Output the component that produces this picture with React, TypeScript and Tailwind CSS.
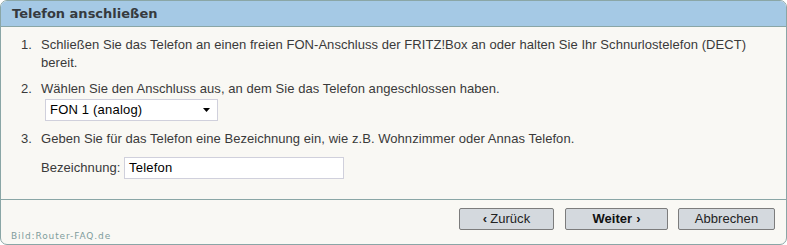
import React from "react";

export default function App() {
  const body = "font-['Liberation_Sans',Arial,sans-serif] text-[13px] tracking-[0.05px] text-[#3a3a3a]";
  return (
    <div className="w-[787px] h-[245px] bg-white">
      <div className="relative w-[787px] h-[245px] border border-[#8aa6a6] rounded-[7px] overflow-hidden bg-[#f9f8f4] flex flex-col">
        <div className="h-[26px] shrink-0 bg-[#a5c9e5] border-b border-[#8aa6a6] pl-[11px] flex items-center">
          <span className="font-['DejaVu_Sans',Verdana,sans-serif] font-bold text-[13px] text-[#363a3e]">
            Telefon anschließen
          </span>
        </div>
        <div className={`flex-1 pt-[9px] pl-[20px] pr-[18px] leading-[18px] ${body}`}>
          <div className="flex">
            <span className="w-[20px] shrink-0">1.</span>
            <span>
              Schließen Sie das Telefon an einen freien FON-Anschluss der FRITZ!Box an oder halten Sie Ihr Schnurlostelefon (DECT) bereit.
            </span>
          </div>
          <div className="flex mt-[8px]">
            <span className="w-[20px] shrink-0">2.</span>
            <div>
              <div>Wählen Sie den Anschluss aus, an dem Sie das Telefon angeschlossen haben.</div>
              <div className="mt-[1px] ml-[4px] w-[173px] h-[22px] bg-white border border-[#d0d0dc] flex items-center justify-between pl-[4px] pr-[6px] text-[13px] tracking-[0.2px] text-black">
                <span>FON 1 (analog)</span>
                <svg width="8" height="4" viewBox="0 0 8 4"><path d="M0 0h7l-3.5 4z" fill="#000" /></svg>
              </div>
            </div>
          </div>
          <div className="flex mt-[9px]">
            <span className="w-[20px] shrink-0">3.</span>
            <div>
              <div>Geben Sie für das Telefon eine Bezeichnung ein, wie z.B. Wohnzimmer oder Annas Telefon.</div>
              <div className="mt-[9px] flex items-center">
                <span className="w-[83px]">Bezeichnung:</span>
                <div className="w-[220px] h-[22px] bg-white border border-[#d0d0dc] flex items-center pl-[4px] text-[13px] tracking-[0.2px] text-black">
                  Telefon
                </div>
              </div>
            </div>
          </div>
        </div>
        <div className="h-[45px] shrink-0 border-t border-[#8aa6a6] flex justify-end items-start pt-[8px] pr-[11px] gap-[10px]">
          <button className={`w-[95px] h-[22px] bg-[#d4d9de] border border-[#7c7c7c] rounded-[2px] flex items-center justify-center ${body} text-[#222]`}>
            <b className="mr-[3px]">‹</b>Zurück
          </button>
          <button className={`w-[103px] h-[22px] ml-[1px] bg-[#d4d9de] border border-[#7c7c7c] rounded-[2px] flex items-center justify-center ${body} font-bold text-[#111]`}>
            Weiter<span className="ml-[4px]">›</span>
          </button>
          <button className={`w-[97px] h-[22px] bg-[#d4d9de] border border-[#7c7c7c] rounded-[2px] flex items-center justify-center ${body} text-[#222]`}>
            Abbrechen
          </button>
        </div>
        <span className="absolute left-[10px] bottom-[1px] font-['DejaVu_Sans',Verdana,sans-serif] text-[9px] text-[#7f9c9c] tracking-[0.9px]">
          Bild:Router-FAQ.de
        </span>
      </div>
    </div>
  );
}
